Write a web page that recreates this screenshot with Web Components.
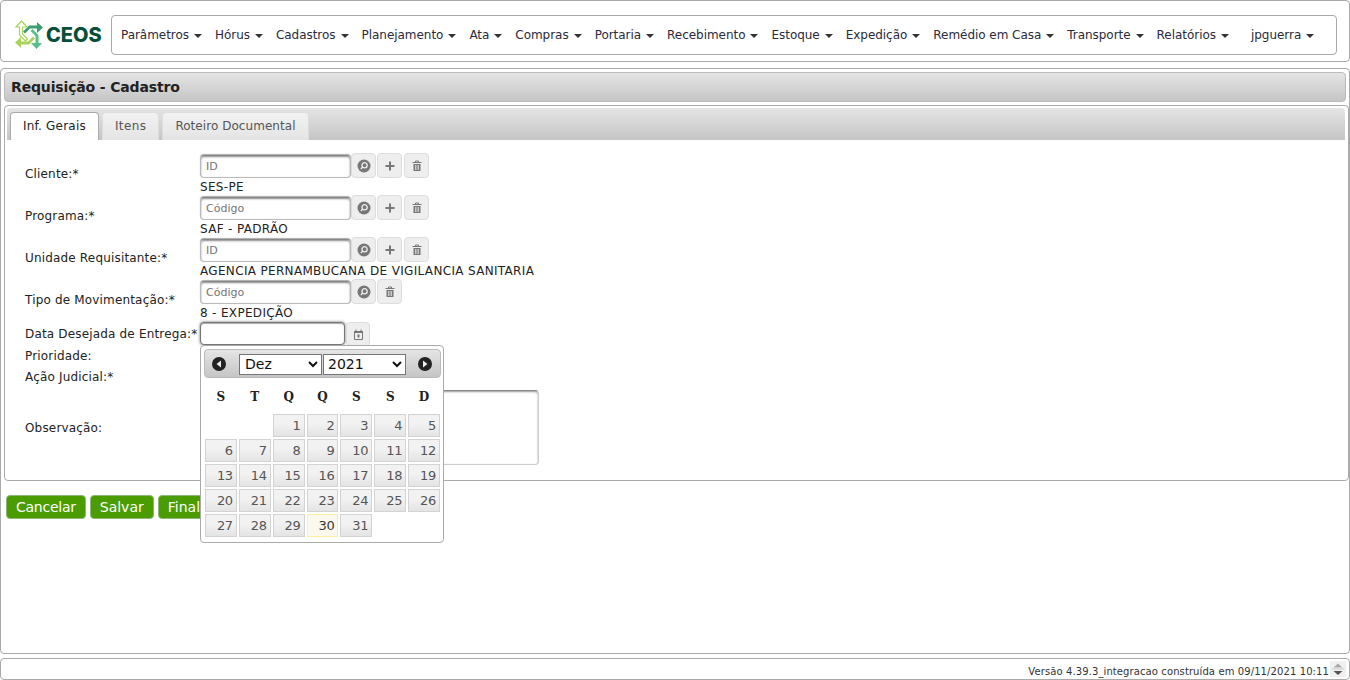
<!DOCTYPE html>
<html lang="pt">
<head>
<meta charset="utf-8">
<title>Requisição - Cadastro</title>
<style>
  html, body { margin: 0; height: 680px; overflow: hidden; background: #fff; }
  body { font: 12px "DejaVu Sans", Verdana, sans-serif; color: #222; }
</style>
</head>
<body>
<app-shell>
  <top-bar slot="top">
    <ceos-logo></ceos-logo>
    <nav-menu>
      <menu-item>Parâmetros</menu-item>
      <menu-item>Hórus</menu-item>
      <menu-item>Cadastros</menu-item>
      <menu-item>Planejamento</menu-item>
      <menu-item>Ata</menu-item>
      <menu-item>Compras</menu-item>
      <menu-item>Portaria</menu-item>
      <menu-item>Recebimento</menu-item>
      <menu-item>Estoque</menu-item>
      <menu-item>Expedição</menu-item>
      <menu-item>Remédio em Casa</menu-item>
      <menu-item>Transporte</menu-item>
      <menu-item>Relatórios</menu-item>
      <menu-item user>jpguerra</menu-item>
    </nav-menu>
  </top-bar>

  <page-panel heading="Requisição - Cadastro">
    <content-box>
      <tab-bar>
        <tab-item active style="letter-spacing:.2px">Inf. Gerais</tab-item>
        <tab-item style="letter-spacing:.4px">Itens</tab-item>
        <tab-item style="letter-spacing:.05px">Roteiro Documental</tab-item>
      </tab-bar>
      <form-grid>
        <form-row label="Cliente:*"><lookup-field placeholder="ID" value="SES-PE" add></lookup-field></form-row>
        <form-row label="Programa:*"><lookup-field placeholder="Código" value="SAF - PADRÃO" add></lookup-field></form-row>
        <form-row label="Unidade Requisitante:*"><lookup-field placeholder="ID" value="AGENCIA PERNAMBUCANA DE VIGILANCIA SANITARIA" add></lookup-field></form-row>
        <form-row label="Tipo de Movimentação:*"><lookup-field placeholder="Código" value="8 - EXPEDIÇÃO"></lookup-field></form-row>
        <form-row label="Data Desejada de Entrega:*" height="23" top="1"><date-field></date-field></form-row>
        <form-row label="Prioridade:" height="21"></form-row>
        <form-row label="Ação Judicial:*" height="21"></form-row>
        <form-row label="Observação:" height="75" top="3"><text-box></text-box></form-row>
      </form-grid>
    </content-box>
    <action-bar>
      <action-button style="letter-spacing:-.25px">Cancelar</action-button>
      <action-button>Salvar</action-button>
      <action-button>Finalizar</action-button>
    </action-bar>
  </page-panel>

  <app-footer slot="bottom">Versão 4.39.3_integracao construída em 09/11/2021 10:11</app-footer>
</app-shell>

<script>
const ICONS = {
  search: '<svg width="14" height="14" viewBox="0 0 14 14"><circle cx="7" cy="7" r="6.5" fill="#777"/><circle cx="7.6" cy="6.2" r="2.6" fill="none" stroke="#eee" stroke-width="1.3"/><path d="M5.6 8.1 3.9 9.9" stroke="#eee" stroke-width="1.4"/></svg>',
  plus: '<svg width="12" height="12" viewBox="0 0 12 12"><path d="M6 1.5v9M1.5 6h9" stroke="#777" stroke-width="2"/></svg>',
  trash: '<svg width="12" height="12" viewBox="0 0 12 12"><path d="M1.5 2.5h9M4.5 2.5V1h3v1.5" fill="none" stroke="#777" stroke-width="1"/><path d="M2.5 4h7v7h-7z" fill="#777"/><path d="M4.5 5v5M6 5v5M7.5 5v5" stroke="#eee" stroke-width=".7"/></svg>',
  calendar: '<svg width="11" height="11" viewBox="0 0 11 11"><path d="M1.5 2.5h8v8h-8z" fill="none" stroke="#777" stroke-width="1"/><path d="M1 2h9v2H1z" fill="#777"/><path d="M3 .5v2M8 .5v2" stroke="#777"/><path d="M4.5 5.5h2v3h-2z" fill="#777"/></svg>'
};
const el = (name, css, html, setup) => {
  customElements.define(name, class extends HTMLElement {
    constructor() {
      super();
      this.attachShadow({ mode: 'open' });
      this.shadowRoot.innerHTML = `<style>${css}</style>${typeof html === 'function' ? html(this) : html}`;
    }
    connectedCallback() { if (setup) setup(this); }
  });
};

el('app-shell', `
  :host { display:flex; flex-direction:column; height:680px; box-sizing:border-box; }
  ::slotted(top-bar) { flex:none; }
  main { flex:1; display:flex; flex-direction:column; min-height:0; }
`, `<slot name="top"></slot><main><slot></slot></main><slot name="bottom"></slot>`);

el('top-bar', `
  :host { display:flex; align-items:center; height:62px; box-sizing:border-box; border:1px solid #aaa; border-radius:4px; padding:14px 12px 6px 13px; background:#fff; }
`, `<slot></slot>`);

el('ceos-logo', `
  :host { display:flex; align-items:center; gap:2px; width:97px; flex:none; height:34px; }
  span { font:800 20px Inter, "DejaVu Sans", sans-serif; color:#06503a; line-height:1; }
  svg { flex:none; }
`, `<svg width="30" height="30" viewBox="0 0 30 30">
    <defs><path id="a" d="M9 11.500 15 5.500h8V2l6 5.500L23 13V8.500h-7L11 13.500z"/></defs>
    <use href="#a" fill="#3f9d72"/>
    <use href="#a" fill="#55c088" transform="rotate(90 15 15)"/>
    <use href="#a" fill="#a8d55a" transform="rotate(180 15 15)"/>
    <use href="#a" fill="#fff" stroke="#a8d55a" stroke-width="1.200" transform="rotate(270 15 15)"/>
  </svg><span>CEOS</span>`);

el('nav-menu', `
  :host { display:flex; align-items:center; flex:1; height:40px; box-sizing:border-box; border:1px solid #aaa; border-radius:4px; padding:0 0 0 9px; gap:13px; color:#222; background:#fff; }
`, `<slot></slot>`);

el('menu-item', `
  :host { display:flex; align-items:center; gap:5px; white-space:nowrap; letter-spacing:-.04px; color:#2a2a3a; }
  :host([user]) { margin-left:9px; }
  i { width:0; height:0; border:4px solid transparent; border-top-color:#333; border-bottom:0; margin-top:1px; }
`, `<slot></slot><i></i>`);

el('page-panel', `
  :host { display:flex; flex-direction:column; flex:1; min-height:0; box-sizing:border-box; margin-top:6px; border:1px solid #aaa; border-radius:4px; padding:3px 0 0 3px; }
  h1 { margin:0 3px 0 0; height:30px; box-sizing:border-box; border:1px solid #bbb; border-radius:4px; background:linear-gradient(#e5e5e5,#c5c5c5); font:bold 14px "DejaVu Sans", Verdana, sans-serif; letter-spacing:-.15px; color:#222; line-height:28px; padding-left:6px; }
`, (h) => `<h1>${h.getAttribute('heading')}</h1><slot></slot>`);

el('content-box', `
  :host { display:block; height:376px; box-sizing:border-box; margin-top:3px; border:1px solid #aaa; border-radius:4px; padding:2px 3px 0 2px; }
`, `<slot></slot>`);

el('tab-bar', `
  :host { display:flex; gap:3px; align-items:flex-end; height:32px; box-sizing:border-box; padding-left:3px; border-radius:4px 4px 0 0; background:linear-gradient(#e5e5e5,#c5c5c5); }
`, `<slot></slot>`);

el('tab-item', `
  :host { display:block; height:28px; box-sizing:border-box; padding:0 12px; line-height:27px; color:#555; background:linear-gradient(#f2f2f2,#e4e4e4); border:1px solid #ddd; border-bottom:0; border-radius:4px 4px 0 0; white-space:nowrap; }
  :host([active]) { background:#fff; color:#222; border-color:#aaa; }
`, `<slot></slot>`);

el('form-grid', `
  :host { display:flex; flex-direction:column; padding:13px 0 0 18px; }
`, `<slot></slot>`);

el('form-row', `
  :host { display:grid; grid-template-columns:175px 1fr; align-items:center; height:var(--h,42px); }
  label { white-space:nowrap; color:#222; letter-spacing:.17px; }
  div { height:100%; }
`, (h) => `<label>${h.getAttribute('label')}</label><div><slot></slot></div>`, (h) => {
  if (h.hasAttribute('height')) h.style.setProperty('--h', h.getAttribute('height') + 'px');
  if (h.hasAttribute('top')) h.style.marginTop = h.getAttribute('top') + 'px';
});

el('icon-button', `
  :host { display:flex; align-items:center; justify-content:center; width:25px; height:25px; box-sizing:border-box; background:#eee; border:1px solid #ddd; border-radius:4px; flex:none; margin-left:1px; }
`, (h) => ICONS[h.getAttribute('icon')]);

el('text-input', `
  :host { display:block; width:151px; height:23px; box-sizing:border-box; border:1px solid #bbb; border-top-color:#888; border-radius:4px; box-shadow:inset 0 1px 2px #888, 0 -1px 1px #aaa; background:#fff; flex:none; font-size:11px; line-height:21px; padding-left:5px; color:#757575; }
  :host([focus]) { width:145px; border-color:#777; box-shadow:0 0 3px #666, inset 0 1px 1px #aaa; }
`, `<slot></slot>`);

el('lookup-field', `
  :host { display:block; }
  .line { display:flex; align-items:flex-start; height:27px; }
  .line text-input { margin-top:2px; }
  .line icon-button:first-of-type { margin-left:0; }
  :host([add]) .line icon-button:last-of-type { margin-left:2px; }
  .val { line-height:14px; white-space:nowrap; color:#222; letter-spacing:.33px; margin-top:-.5px; }
`, (h) => `<div class="line"><text-input>${h.getAttribute('placeholder')}</text-input>
  <icon-button icon="search"></icon-button>${h.hasAttribute('add') ? '<icon-button icon="plus"></icon-button>' : ''}<icon-button icon="trash"></icon-button></div>
  <div class="val">${h.getAttribute('value')}</div>`);

el('date-field', `
  :host { display:flex; position:relative; height:23px; align-items:flex-start; }
  icon-button { margin-left:1px; height:24px; width:24px; }
  cal-popup { position:absolute; left:0; top:23px; z-index:5; }
`, `<text-input focus></text-input><icon-button icon="calendar"></icon-button><cal-popup></cal-popup>`);

el('cal-popup', `
  :host { display:block; width:244px; height:198px; box-sizing:border-box; border:1px solid #aaa; border-radius:4px; background:#fff; padding:3px 3px 0 3px; }
  header { display:flex; align-items:center; height:29px; box-sizing:border-box; border:1px solid #bbb; border-radius:4px; background:linear-gradient(#e5e5e5,#c5c5c5); width:237px; padding:0 8px 0 7px; }
  header svg { flex:none; }
  .sel { display:flex; gap:1px; margin:1px auto 0 13px; }
  select { font:14px "DejaVu Sans", Verdana, sans-serif; height:21px; width:83px; color:#111; background:#fff; border:1px solid #767676; border-radius:0; padding:0 0 0 1px; }
  select + select { padding:0; }
  .hd, .days { display:grid; grid-template-columns:repeat(7,1fr); column-gap:2px; width:235px; margin-left:1px; }
  .hd { height:36px; align-items:center; font:bold 12px "DejaVu Serif", serif; color:#222; text-align:center; }
  .hd span { transform:translateY(1px); }
  .days { grid-auto-rows:23px; row-gap:2px; }
  .d { box-sizing:border-box; border:1px solid #d3d3d3; background:linear-gradient(#f2f2f2 40%,#e4e4e4); color:#555; text-align:right; padding-right:3px; line-height:22px; font-size:13px; letter-spacing:-.3px; }
  .t { border-color:#fcefa1; background:#fbf9ee; color:#363636; }
`, () => {
  const heads = ['S','T','Q','Q','S','S','D'].map(x => `<span>${x}</span>`).join('');
  let days = '<span></span><span></span>';
  for (let i = 1; i <= 31; i++) days += `<span class="d${i === 30 ? ' t' : ''}">${i}</span>`;
  return `<header>
    <svg width="14" height="14" viewBox="0 0 14 14"><circle cx="7" cy="7" r="7" fill="#222"/><path d="M9 3.500v7L4.500 7z" fill="#eee"/></svg>
    <div class="sel"><select><option>Dez</option></select><select><option>2021</option></select></div>
    <svg width="14" height="14" viewBox="0 0 14 14"><circle cx="7" cy="7" r="7" fill="#222"/><path d="M5 3.500v7L9.500 7z" fill="#eee"/></svg>
  </header>
  <div class="hd">${heads}</div><div class="days">${days}</div>`;
});

el('text-box', `
  :host { display:block; width:339px; height:75px; box-sizing:border-box; border:1px solid #ccc; border-top-color:#888; border-radius:4px; box-shadow:inset 0 1px 2px #999; background:#fff; }
`, ``);

el('action-bar', `
  :host { display:flex; gap:4px; padding:14px 0 0 2px; }
`, `<slot></slot>`);

el('action-button', `
  :host { display:block; height:24px; box-sizing:border-box; padding:0 9px; background:#4a9c00; color:#fff; border:1px solid #8fb878; border-radius:4px; font-size:14px; line-height:23px; white-space:nowrap; }
`, `<slot></slot>`);

el('app-footer', `
  :host { display:flex; align-items:center; justify-content:flex-end; height:22px; box-sizing:border-box; margin-top:4px; border:1px solid #aaa; border-radius:4px; padding-right:3px; font-size:10px; letter-spacing:.1px; color:#333; gap:1px; }
  span { padding-top:5px; }
  svg { flex:none; }
`, `<span><slot></slot></span><svg width="16" height="16" viewBox="0 0 16 16"><rect width="16" height="16" fill="#f0f0f0"/><path d="M8 2.500l4.500 4h-9z" fill="#aaa"/><path d="M2 8h12" stroke="#ccc"/><path d="M8 14l-4.500-4h9z" fill="#555"/></svg>`);
</script>
</body>
</html>
